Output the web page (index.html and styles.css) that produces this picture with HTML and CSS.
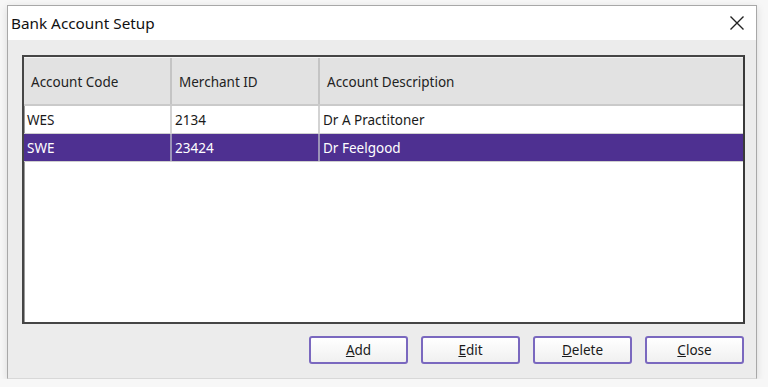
FILE: index.html
```html
<!DOCTYPE html>
<html>
<head>
  <link rel="stylesheet" href="styles.css">
  <title>Bank Account Setup</title>
</head>
<body>
  <div class="window">
    <div class="titlebar">
      <span class="title">Bank Account Setup</span>
      <svg class="close" width="16" height="16" viewBox="0 0 16 16">
        <path d="M1.5 1.5 L14.5 14.5 M14.5 1.5 L1.5 14.5" stroke="#222" stroke-width="1.4" fill="none"/>
      </svg>
    </div>
    <div class="content">
      <div class="grid">
        <div class="row head">
          <div class="cell">Account Code</div>
          <div class="cell">Merchant ID</div>
          <div class="cell">Account Description</div>
        </div>
        <div class="row">
          <div class="cell">WES</div>
          <div class="cell">2134</div>
          <div class="cell">Dr A Practitoner</div>
        </div>
        <div class="row selected">
          <div class="cell">SWE</div>
          <div class="cell">23424</div>
          <div class="cell">Dr Feelgood</div>
        </div>
      </div>
      <div class="buttons">
        <button><u>A</u>dd</button>
        <button><u>E</u>dit</button>
        <button><u>D</u>elete</button>
        <button><u>C</u>lose</button>
      </div>
    </div>
  </div>
</body>
</html>
```

FILE: styles.css
```css
body {
  margin: 0;
  background-color: #f7f7f7;
  font-family: "Noto Sans", "Open Sans", sans-serif;
  color: #1a1a1a;
}

.window {
  margin: 5px 0 0 7px;
  width: 750px;
  height: 374px;
  border: 1px solid #a8a8a8;
  border-bottom-color: #d8d8d8;
  box-sizing: border-box;
  background-color: #ececec;
  box-shadow: 0 2px 8px rgba(0, 0, 0, 0.12);
  display: flex;
  flex-direction: column;
}

.titlebar {
  height: 34px;
  background-color: white;
  display: flex;
  align-items: center;
  justify-content: space-between;
  padding: 0 11px 0 3px;
}

.title {
  font-size: 15.3px;
  color: #111;
}

.content {
  padding: 15px 11px 0 14px;
}

.grid {
  height: 269px;
  box-sizing: border-box;
  background-color: white;
  border: 2px solid #454545;
  border-right-color: #3a3a3a;
  box-shadow: inset 1px 1px 0 #9a9a9a;
  font-size: 13.5px;
}

.row {
  display: grid;
  grid-template-columns: 148px 148px 1fr;
  height: 27px;
  border-bottom: 1px solid #cfcfcf;
}

.row .cell {
  border-right: 2px solid #d3d3d3;
  padding-left: 3px;
  display: flex;
  align-items: center;
  white-space: nowrap;
}

.row .cell:last-child {
  border-right: none;
}

.head {
  height: 46px;
  background-color: #e2e2e2;
  border-top: 1px solid #f4f4f4;
  border-bottom: 2px solid #cacaca;
}

.head .cell {
  padding-left: 7px;
  padding-top: 2px;
  border-right-color: #c4c4c4;
  color: #222;
}

.selected {
  background-color: #4e3091;
  color: white;
}

.selected .cell {
  border-right-color: #9b93b8;
}

.buttons {
  display: flex;
  justify-content: flex-end;
  gap: 13px;
  margin-top: 12px;
  padding-right: 1px;
}

button {
  width: 99px;
  height: 28px;
  font-family: "Noto Sans", "Open Sans", sans-serif;
  font-size: 13.5px;
  color: #1a1a1a;
  background: linear-gradient(#ffffff, #f0f0f0);
  border: 2px solid #7a68bf;
  border-radius: 3px;
  padding: 0;
}
```
